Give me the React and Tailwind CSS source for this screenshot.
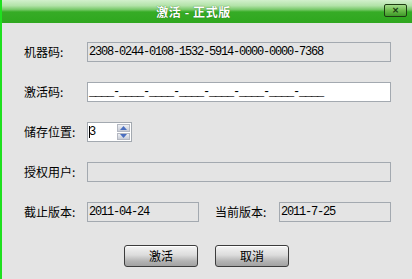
import React from "react";

const cjk = { fontFamily: '"Noto Sans CJK SC", "Noto Sans", sans-serif' };
const mono = { fontFamily: '"Liberation Mono", "DejaVu Sans Mono", monospace' };

function Label({ children }) {
  return (
    <div className="w-[63px] shrink-0 text-[12px] leading-[20px] text-black" style={cjk}>
      {children}
    </div>
  );
}

function Field({ children, white, className = "" }) {
  return (
    <div
      className={`h-[20px] border border-[#a3a9b0] ${white ? "bg-white" : "bg-[#e4e4e4]"} flex items-center pl-[1px] text-[12px] tracking-[-1.2px] text-black overflow-hidden whitespace-pre ${className}`}
      style={mono}
    >
      {children}
    </div>
  );
}

function Btn({ children }) {
  return (
    <button
      className="w-[74px] h-[22px] rounded-[3px] border border-[#3c3c3c] bg-[linear-gradient(to_bottom,#f4f4f4_0%,#dcdcdc_45%,#b4b4b4_75%,#a2a2a2_100%)] shadow-[inset_0_1px_0_#ffffff] text-[12px] leading-[20px] text-black flex items-center justify-center"
      style={cjk}
    >
      {children}
    </button>
  );
}

export default function App() {
  return (
    <div className="w-[412px] h-[279px] bg-[#e4e4e4] flex flex-col overflow-hidden relative">
      <div className="h-[23px] shrink-0 bg-[linear-gradient(to_bottom,#d2f0cc_0%,#b2e2a8_25%,#76c868_42%,#36ac26_52%,#2fa71f_100%)] flex items-center justify-center pr-[27px] border-l-2 border-[#1fe01f]">
        <span
          className="text-white font-bold text-[12px] leading-none tracking-[0.6px] [text-shadow:0_0_1px_#1a5a10]"
          style={cjk}
        >
          激活 - 正式版
        </span>
      </div>
      <div className="absolute left-[384px] top-[4px] w-[23px] h-[13px] rounded-[2px] border border-[#1d3d12] bg-[linear-gradient(to_bottom,#a4dc8c_0%,#6cbc4c_50%,#3e9a28_100%)] flex items-center justify-center">
        <span className="text-[#173510] text-[9px] font-bold leading-none" style={{ fontFamily: '"DejaVu Sans", sans-serif' }}>
          ×
        </span>
      </div>
      <div className="flex-1 border-l-2 border-[#1fe01f] pl-[22px] pt-[19px] flex flex-col">
        <div className="flex items-center">
          <Label>机器码:</Label>
          <Field className="w-[304px]">2308-0244-0108-1532-5914-0000-0000-7368</Field>
        </div>
        <div className="flex items-center mt-[20px]">
          <Label>激活码:</Label>
          <Field white className="w-[304px]">____-____-____-____-____-____-____-____</Field>
        </div>
        <div className="flex items-center mt-[20px]">
          <Label>储存位置:</Label>
          <div className="w-[45px] h-[20px] border border-[#a3a9b0] bg-white flex items-center pl-[1px] relative">
            <span className="text-[12px] text-black" style={mono}>3</span>
            <span className="absolute left-[1px] top-[3px] w-[1px] h-[12px] bg-black"></span>
            <div className="absolute right-[1px] top-[1px] w-[13px] h-[16px] flex flex-col gap-[1px]">
              <div className="flex-1 bg-[linear-gradient(to_bottom,#eef0f4,#c8ccd6)] border border-[#b4b8c2] flex items-center justify-center">
                <svg width="7" height="4" viewBox="0 0 7 4"><path d="M0 4 L3.5 0 L7 4 Z" fill="#4a6ec0" /></svg>
              </div>
              <div className="flex-1 bg-[linear-gradient(to_bottom,#eef0f4,#c8ccd6)] border border-[#b4b8c2] flex items-center justify-center">
                <svg width="7" height="4" viewBox="0 0 7 4"><path d="M0 0 L3.5 4 L7 0 Z" fill="#4a6ec0" /></svg>
              </div>
            </div>
          </div>
        </div>
        <div className="flex items-center mt-[20px]">
          <Label>授权用户:</Label>
          <Field className="w-[304px]"></Field>
        </div>
        <div className="flex items-center mt-[20px]">
          <Label>截止版本:</Label>
          <Field className="w-[112px]">2011-04-24</Field>
          <div className="w-[64px] ml-[16px] text-[12px] leading-[20px] text-black" style={cjk}>当前版本:</div>
          <Field className="w-[112px]">2011-7-25</Field>
        </div>
        <div className="flex mt-[23px] pl-[100px] gap-[17px]">
          <Btn>激活</Btn>
          <Btn>取消</Btn>
        </div>
      </div>
    </div>
  );
}
